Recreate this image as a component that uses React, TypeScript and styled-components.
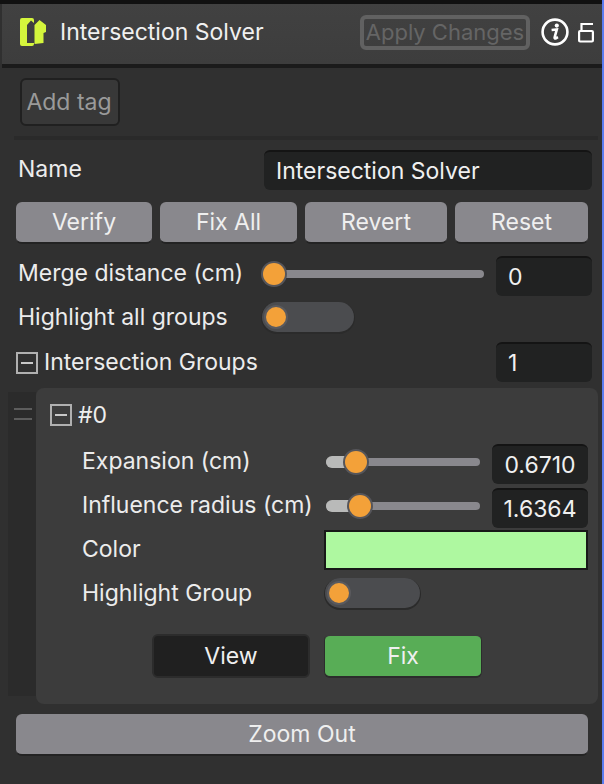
import React from "react";
import styled, { createGlobalStyle } from "styled-components";

const GlobalStyle = createGlobalStyle`
  html, body {
    margin: 0;
    padding: 0;
    background: #303030;
    font-family: Inter, "Noto Sans", sans-serif;
  }
  * { box-sizing: border-box; }
`;

const Window = styled.div`
  position: relative;
  width: 604px;
  height: 784px;
  overflow: hidden;
  padding: 4px 2px 0 2px;
  background: #303030;
  color: #eeeeee;
  font-size: 23px;
  line-height: 28px;
  display: flex;
  flex-direction: column;
  &::before {
    content: "";
    position: absolute;
    inset: 0 2px auto 0;
    height: 4px;
    background: #111111;
  }
  &::after {
    content: "";
    position: absolute;
    top: 0;
    right: 0;
    bottom: 0;
    width: 2px;
    background: #5b7cf0;
  }
`;

const Header = styled.header`
  height: 64px;
  flex: none;
  background: linear-gradient(#414141, #3d3d3d);
  border-bottom: 4px solid #1b1b1b;
  display: flex;
  align-items: center;
  padding: 0 8px 4px 17px;
`;

const Title = styled.div`
  margin-left: 13px;
  flex: 1;
  color: #f0f0f0;
  white-space: nowrap;
`;

const ApplyButton = styled.div`
  width: 170px;
  height: 35px;
  flex: none;
  margin-left: 1px;
  border: 4px solid #616161;
  border-radius: 6px;
  color: #656565;
  white-space: nowrap;
  display: flex;
  align-items: center;
  justify-content: center;
  font-size: 22px;
`;

const IconBox = styled.div<{ $left: number }>`
  display: flex;
  flex: none;
  margin-left: ${(p) => p.$left}px;
`;

const Body = styled.main`
  padding: 10px 4px 0 12px;
  display: flex;
  flex-direction: column;
`;

const TagButton = styled.div`
  width: 100px;
  height: 48px;
  margin-left: 6px;
  padding-right: 2px;
  border: 2px solid #202020;
  border-radius: 6px;
  background: #383838;
  color: #9a9a9a;
  display: flex;
  align-items: center;
  justify-content: center;
`;

const Divider = styled.div`
  height: 4px;
  margin: 10px 0 10px;
  background: #2a2a2a;
`;

const Row = styled.div<{ $height?: number; $mt?: number }>`
  display: flex;
  align-items: center;
  height: ${(p) => p.$height ?? 40}px;
  margin-top: ${(p) => p.$mt ?? 0}px;
`;

const Label = styled.div<{ $width: number; $indent?: number; $lift?: number }>`
  width: ${(p) => p.$width}px;
  flex: none;
  padding-left: ${(p) => p.$indent ?? 4}px;
  padding-bottom: ${(p) => p.$lift ?? 0}px;
  white-space: nowrap;
  color: #ececec;
`;

const TextField = styled.div<{ $width: number; $center?: boolean; $left?: number }>`
  width: ${(p) => p.$width}px;
  height: 40px;
  flex: none;
  margin-left: ${(p) => p.$left ?? 0}px;
  background: #212222;
  border-top: 2px solid #141414;
  border-radius: 6px;
  display: flex;
  align-items: center;
  padding: 0 12px;
  justify-content: ${(p) => (p.$center ? "center" : "flex-start")};
  color: #f0f0f0;
`;

const ActionRow = styled.div`
  display: flex;
  margin: 12px 0 12px 2px;
  height: 42px;
`;

const GreyButton = styled.div<{ $width: number; $left?: number; $mt?: number }>`
  width: ${(p) => p.$width}px;
  flex: none;
  height: 42px;
  margin-left: ${(p) => p.$left ?? 0}px;
  margin-top: ${(p) => p.$mt ?? 0}px;
  background: #89888d;
  border-bottom: 2px solid #232323;
  border-radius: 6px;
  color: #efefef;
  display: flex;
  align-items: center;
  justify-content: center;
`;

const SliderTrack = styled.div<{ $width: number; $left?: number }>`
  position: relative;
  width: ${(p) => p.$width}px;
  height: 8px;
  flex: none;
  margin-left: ${(p) => p.$left ?? 0}px;
  margin-bottom: 4px;
  border-radius: 4px;
  background: #89888d;
`;

const SliderFill = styled.div`
  position: absolute;
  left: 0;
  top: -2px;
  bottom: -2px;
  border-radius: 6px 0 0 6px;
  background: #b9bab9;
`;

const SliderThumb = styled.div`
  position: absolute;
  top: 50%;
  width: 22px;
  height: 22px;
  margin: -11px 0 0 -11px;
  border-radius: 50%;
  background: #f3a139;
  box-shadow: 0 0 0 2px #55555a;
`;

const Toggle = styled.div<{ $width: number }>`
  width: ${(p) => p.$width}px;
  height: 30px;
  flex: none;
  border-radius: 15px;
  background: #4b4c4f;
  box-shadow: 0 1px 0 1px #2b2b2b;
  padding: 4px 0 0 4px;
`;

const ToggleKnob = styled.div`
  width: 20px;
  height: 20px;
  margin-top: 1px;
  border-radius: 50%;
  background: #f3a139;
  box-shadow: 0 0 0 2px #5a5a5e;
`;

const Collapse = styled.div<{ $left: number; $top?: number }>`
  width: 22px;
  height: 22px;
  flex: none;
  margin: ${(p) => p.$top ?? 0}px 6px 0 ${(p) => p.$left}px;
  border: 2px solid #b0b0b0;
  display: flex;
  align-items: center;
  justify-content: center;
  &::after {
    content: "";
    width: 12px;
    height: 2px;
    background: #c8c8c8;
  }
`;

const GroupWrap = styled.div`
  display: flex;
  margin: 6px 0 0 -6px;
  height: 316px;
`;

const DragStrip = styled.div`
  width: 28px;
  height: 304px;
  margin-top: 4px;
  flex: none;
  background: #2b2b2b;
  padding: 16px 4px 0 6px;
  &::before {
    content: "";
    display: block;
    height: 8px;
    border-top: 2px solid #5d5d5d;
    border-bottom: 2px solid #5d5d5d;
  }
`;

const GroupCard = styled.section`
  flex: 1;
  background: #3c3c3c;
  border-radius: 8px;
  padding: 12px 0 0 14px;
`;

const GroupHeader = styled.div`
  display: flex;
  align-items: center;
  height: 30px;
`;

const FieldRow = styled.div<{ $mt: number; $height?: number }>`
  display: flex;
  align-items: center;
  margin-top: ${(p) => p.$mt}px;
  height: ${(p) => p.$height ?? 40}px;
`;

const Swatch = styled.div`
  width: 264px;
  height: 40px;
  flex: none;
  background: #aef8a0;
  border: 2px solid #181818;
`;

const GroupActions = styled.div`
  display: flex;
  gap: 14px;
  margin: 26px 0 0 102px;
`;

const ViewButton = styled.div`
  width: 158px;
  height: 44px;
  background: #202020;
  border: 2px solid #2c2c2c;
  border-radius: 6px;
  display: flex;
  align-items: center;
  justify-content: center;
  color: #efefef;
`;

const FixButton = styled(ViewButton)`
  background: #58ad56;
  border-color: #2c2c2c;
  border-width: 2px 1px 2px 1px;
  border-top-color: #3c3c3c;
`;

const ShirtIcon = () => (
  <svg width="28" height="30" viewBox="0 0 28 30">
    <path
      fill="#d4f53c"
      d="M3 1 H13 Q15 1 15 3 V6 L12 3.5 L8 8 V26 H15 V27 Q15 29 13 29 H3 Q1 29 1 27 V3 Q1 1 3 1 Z"
    />
    <path fill="#d4f53c" d="M15.5 8 L20.5 3 L27 8 V15 L24.5 16 V26 L15.5 27 Z" />
  </svg>
);

const InfoIcon = () => (
  <svg width="28" height="28" viewBox="0 0 28 28">
    <circle cx="14" cy="14" r="12.4" fill="none" stroke="#fff" strokeWidth="2.6" />
    <circle cx="15.8" cy="7.6" r="2.1" fill="#fff" />
    <path
      d="M10.6 12 L15.8 11.4 L13.6 19.4 Q13.4 20.8 15 20.2 L17 19.2"
      fill="none"
      stroke="#fff"
      strokeWidth="2.6"
    />
  </svg>
);

const UnlockIcon = () => (
  <svg width="16" height="22" viewBox="0 0 16 22">
    <path d="M3.5 10 V3 H15" fill="none" stroke="#fff" strokeWidth="2.2" />
    <rect x="1.1" y="10" width="13.8" height="10.5" rx="1" fill="none" stroke="#fff" strokeWidth="2.2" />
  </svg>
);

const Slider = ({ width, pos, fill }: { width: number; pos: number; fill?: boolean }) => (
  <SliderTrack $width={width}>
    {fill && <SliderFill style={{ width: pos }} />}
    <SliderThumb style={{ left: pos }} />
  </SliderTrack>
);

export default function App() {
  return (
    <>
      <GlobalStyle />
      <Window>
        <Header>
          <ShirtIcon />
          <Title>Intersection Solver</Title>
          <ApplyButton>Apply Changes</ApplyButton>
          <IconBox $left={11}>
            <InfoIcon />
          </IconBox>
          <IconBox $left={9}>
            <UnlockIcon />
          </IconBox>
        </Header>
        <Body>
          <TagButton>Add tag</TagButton>
          <Divider />
          <Row>
            <Label $width={250} $lift={2}>Name</Label>
            <TextField $width={328}>Intersection Solver</TextField>
          </Row>
          <ActionRow>
            <GreyButton $width={136}>Verify</GreyButton>
            <GreyButton $width={137} $left={8}>Fix All</GreyButton>
            <GreyButton $width={142} $left={8}>Revert</GreyButton>
            <GreyButton $width={133} $left={8}>Reset</GreyButton>
          </ActionRow>
          <Row>
            <Label $width={248} $lift={6}>Merge distance (cm)</Label>
            <Slider width={222} pos={12} />
            <TextField $width={96} $left={12}>0</TextField>
          </Row>
          <Row $height={30} $mt={6}>
            <Label $width={248}>Highlight all groups</Label>
            <Toggle $width={92}>
              <ToggleKnob />
            </Toggle>
          </Row>
          <Row $mt={10}>
            <Collapse $left={2} $top={2} />
            <Label $width={452} $indent={0}>Intersection Groups</Label>
            <TextField $width={96}>1</TextField>
          </Row>
          <GroupWrap>
            <DragStrip />
            <GroupCard>
              <GroupHeader>
                <Collapse $left={0} />
                #0
              </GroupHeader>
              <FieldRow $mt={14}>
                <Label $width={276} $indent={32} $lift={6}>Expansion (cm)</Label>
                <Slider width={154} pos={30} fill />
                <TextField $width={96} $center $left={12}>0.6710</TextField>
              </FieldRow>
              <FieldRow $mt={4}>
                <Label $width={276} $indent={32} $lift={6}>Influence radius (cm)</Label>
                <Slider width={154} pos={34} fill />
                <TextField $width={96} $center $left={12}>1.6364</TextField>
              </FieldRow>
              <FieldRow $mt={2}>
                <Label $width={274} $indent={32} $lift={2}>Color</Label>
                <Swatch />
              </FieldRow>
              <FieldRow $mt={8} $height={30}>
                <Label $width={275} $indent={32}>Highlight Group</Label>
                <Toggle $width={95}>
                  <ToggleKnob />
                </Toggle>
              </FieldRow>
              <GroupActions>
                <ViewButton>View</ViewButton>
                <FixButton>Fix</FixButton>
              </GroupActions>
            </GroupCard>
          </GroupWrap>
          <GreyButton $width={572} $left={2} $mt={10}>Zoom Out</GreyButton>
        </Body>
      </Window>
    </>
  );
}
